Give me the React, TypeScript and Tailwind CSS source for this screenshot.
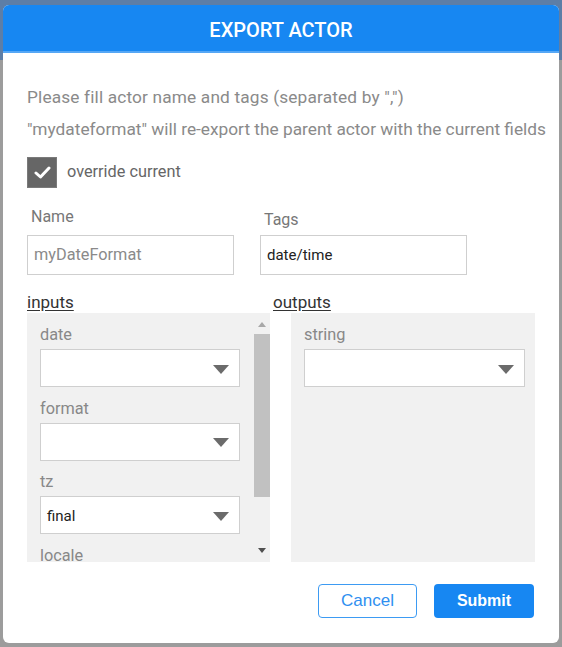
// Export actor modal — header, hint text, name/tags, inputs/outputs panes, actions.

const ROBOTO = "font-['Roboto','Liberation_Sans',sans-serif]"
const ARIAL = "font-['Liberation_Sans','Arial',sans-serif]"

function Caret() {
  return (
    <svg width="16" height="9" viewBox="0 0 16 9" className="shrink-0">
      <polygon points="0,0 16,0 8,9" fill="#6b6b6b" />
    </svg>
  )
}

function SelectBox({ value, width }: { value?: string; width: string }) {
  return (
    <div
      className={`${width} h-[38px] bg-white border border-[#cfcfcf] flex items-center justify-between pl-[6px] pr-[10px] text-[15px] text-[#222]`}
    >
      <span className="pt-[2px]">{value || ''}</span>
      <span className="pt-[2px]">
        <Caret />
      </span>
    </div>
  )
}

function Field({ label, value, width }: { label: string; value?: string; width: string }) {
  return (
    <div className="flex flex-col mb-[11.5px]">
      <div className="h-[18px] leading-[18px] text-[16.3px] text-[#888] mt-[1px] mb-[5px]">{label}</div>
      <SelectBox value={value} width={width} />
    </div>
  )
}

function FakeScrollbar() {
  return (
    <div className="w-[17px] shrink-0 flex flex-col items-center pt-[9px] pb-[9px]">
      <svg width="8" height="5" viewBox="0 0 8 5">
        <polygon points="0,5 8,5 4,0" fill="#a8a8a8" />
      </svg>
      <div className="w-[16px] h-[163px] bg-[#c1c1c1] mt-[7px]" />
      <div className="flex-1" />
      <svg width="8" height="5" viewBox="0 0 8 5">
        <polygon points="0,0 8,0 4,5" fill="#505050" />
      </svg>
    </div>
  )
}

export default function App() {
  const inputs = [
    { label: 'date' },
    { label: 'format' },
    { label: 'tz', value: 'final' },
    { label: 'locale' },
  ]

  return (
    <div
      className={`${ROBOTO} w-[562px] h-[647px] overflow-hidden bg-[linear-gradient(to_bottom,#5d7ea7_0px,#5d7ea7_60px,#9c9c9c_60px)] pt-[5px] px-[3px]`}
    >
      <div className="w-[556px] h-[638px] bg-white rounded-[6px] overflow-hidden flex flex-col">
        {/* header */}
        <div className="h-[48px] bg-[#1787f2] border-b-2 border-[#56a7f5] flex items-center justify-center pt-[4px]">
          <span className="text-white text-[20px] font-medium">EXPORT ACTOR</span>
        </div>

        <div className="px-[24px] pt-[35px] flex flex-col">
          <p className="text-[17.3px] leading-[18px] text-[#8a8a8a] whitespace-nowrap tracking-[0.15px]">
            Please fill actor name and tags (separated by ",")
          </p>
          <p className="mt-[14px] text-[17.3px] leading-[18px] text-[#8a8a8a] whitespace-nowrap">
            "mydateformat" will re-export the parent actor with the current fields
          </p>

          {/* override checkbox */}
          <div className="mt-[19px] flex items-center gap-[10px]">
            <div className="w-[30px] h-[31px] bg-[#666] border border-[#7a7a7a] flex items-center justify-center">
              <svg width="17" height="13" viewBox="0 0 17 13">
                <polyline
                  points="2,7 6.5,11 15,2"
                  fill="none"
                  stroke="white"
                  strokeWidth="3"
                  strokeLinecap="round"
                  strokeLinejoin="round"
                />
              </svg>
            </div>
            <span className="text-[16.3px] text-[#666]">override current</span>
          </div>

          {/* name / tags */}
          <div className="mt-[20px] flex gap-[26px]">
            <div className="flex flex-col w-[207px]">
              <div className="h-[18px] leading-[18px] text-[16px] text-[#777] pl-[4px] mb-[9px]">Name</div>
              <div className="h-[40px] border border-[#cfcfcf] flex items-center px-[6px] pt-[1px] text-[16.3px] text-[#8a8a8a]">
                myDateFormat
              </div>
            </div>
            <div className="flex flex-col w-[207px]">
              <div className="h-[18px] leading-[18px] text-[16px] text-[#777] pl-[4px] mt-[3px] mb-[6px]">Tags</div>
              <div className="h-[40px] border border-[#cfcfcf] flex items-center px-[6px] pt-[1px] text-[15px] text-[#222]">
                date/time
              </div>
            </div>
          </div>

          {/* inputs / outputs */}
          <div className="mt-[18px] flex">
            <div className="flex flex-col w-[243px]">
              <div className="h-[18px] leading-[18px] text-[17px] text-[#333] underline underline-offset-2 mb-[2px]">
                inputs
              </div>
              <div className="h-[249px] bg-[#f1f1f1] flex">
                <div className="flex-1 overflow-hidden pl-[13px] pt-[12px]">
                  {inputs.map((f) => (
                    <Field key={f.label} label={f.label} value={f.value} width="w-[200px]" />
                  ))}
                </div>
                <FakeScrollbar />
              </div>
            </div>
            <div className="flex flex-col ml-[3px]">
              <div className="h-[18px] leading-[18px] text-[17px] text-[#333] underline underline-offset-2 mb-[2px]">
                outputs
              </div>
              <div className="ml-[18px] w-[244px] h-[249px] bg-[#f1f1f1] pl-[13px] pt-[12px]">
                <Field label="string" width="w-[221px]" />
              </div>
            </div>
          </div>

          {/* actions */}
          <div className={`${ARIAL} mt-[22px] flex justify-end gap-[17px] pr-[1px]`}>
            <button className="w-[99px] h-[34px] rounded-[4px] border border-[#3d9bf3] bg-white text-[#2f8ff0] text-[17px]">
              Cancel
            </button>
            <button className="w-[100px] h-[34px] rounded-[4px] bg-[#1787f2] text-white text-[16px] font-bold">
              Submit
            </button>
          </div>
        </div>
      </div>
    </div>
  )
}
